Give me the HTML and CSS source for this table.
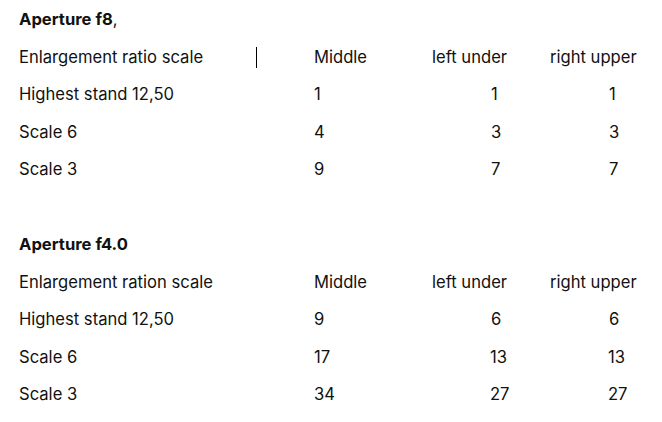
FILE: index.html
```html
<!DOCTYPE html>
<html>
<head>
<meta charset="utf-8">
<link rel="stylesheet" href="styles.css">
</head>
<body>
<div class="doc">
  <p class="title"><b>Aperture f8</b>,</p>
  <div class="table">
    <div class="row">
      <span class="label">Enlargement ratio scale<span class="caret"></span></span>
      <span class="c1">Middle</span>
      <span class="c2">left under</span>
      <span class="c3">right upper</span>
    </div>
    <div class="row">
      <span class="label">Highest stand 12,50</span>
      <span class="c1">1</span>
      <span class="c2 num">1</span>
      <span class="c3 num">1</span>
    </div>
    <div class="row">
      <span class="label">Scale 6</span>
      <span class="c1">4</span>
      <span class="c2 num">3</span>
      <span class="c3 num">3</span>
    </div>
    <div class="row">
      <span class="label">Scale 3</span>
      <span class="c1">9</span>
      <span class="c2 num">7</span>
      <span class="c3 num">7</span>
    </div>
  </div>
  <p class="blank"></p>
  <p class="title"><b>Aperture f4.0</b></p>
  <div class="table">
    <div class="row">
      <span class="label">Enlargement ration scale</span>
      <span class="c1">Middle</span>
      <span class="c2">left under</span>
      <span class="c3">right upper</span>
    </div>
    <div class="row">
      <span class="label">Highest stand 12,50</span>
      <span class="c1">9</span>
      <span class="c2 num">6</span>
      <span class="c3 num">6</span>
    </div>
    <div class="row">
      <span class="label">Scale 6</span>
      <span class="c1">17</span>
      <span class="c2 num2">13</span>
      <span class="c3 num2">13</span>
    </div>
    <div class="row">
      <span class="label">Scale 3</span>
      <span class="c1">34</span>
      <span class="c2 num2">27</span>
      <span class="c3 num2">27</span>
    </div>
  </div>
</div>
</body>
</html>
```
FILE: styles.css
```css
html, body {
  margin: 0;
  padding: 0;
  background: #ffffff;
}
body {
  font-family: Inter, "Open Sans", "Liberation Sans", sans-serif;
  font-size: 16.6px;
  color: #111111;
}
.doc {
  padding: 1px 0 0 19px;
}
.title, .blank {
  margin: 0;
  height: 37.5px;
  line-height: 37.5px;
}
.title b {
  font-weight: 700;
}
.row {
  display: grid;
  grid-template-columns: 295px 118px 118px 118px;
  height: 37.5px;
  line-height: 37.5px;
}
.label {
  position: relative;
}
.caret {
  position: absolute;
  left: 237px;
  top: 8px;
  width: 1px;
  height: 21px;
  background: #000;
}
.num {
  padding-left: 59px;
}
.num2 {
  padding-left: 58px;
}
```
